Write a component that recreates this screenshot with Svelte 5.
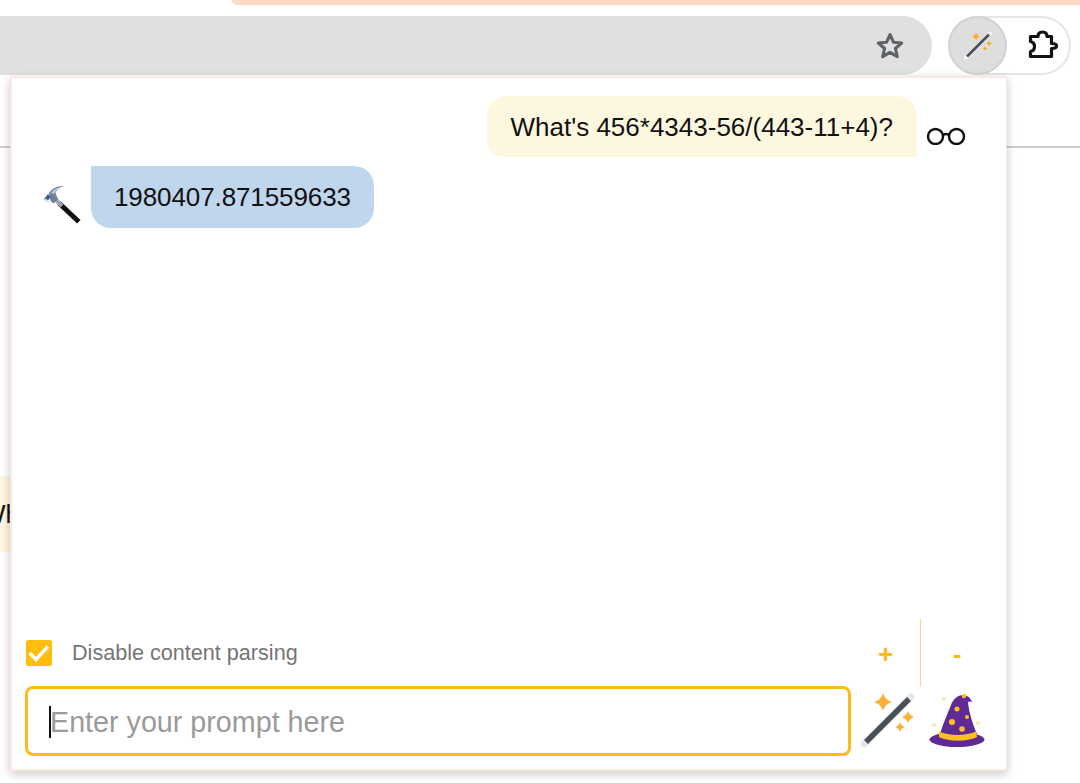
<script>
	const messages = [
		{ id: 1, from: 'user', text: "What's 456*4343-56/(443-11+4)?" },
		{ id: 2, from: 'tool', text: '1980407.871559633' }
	];

	let disableParsing = $state(true);
	let prompt = $state('');
</script>

<div class="window">
	<div class="tabstrip"><div class="active-tab"></div></div>

	<div class="toolbar">
		<div class="omnibox">
			<svg class="star" viewBox="0 0 30 30" width="30" height="30" aria-hidden="true">
				<path
					d="M15 3.600l3.400 7.600 8.300.8-6.300 5.500 1.900 8.100-7.300-4.300-7.300 4.300 1.900-8.100L3.300 12l8.300-.8z"
					fill="none"
					stroke="#5f6368"
					stroke-width="3.100"
					stroke-linejoin="round"
				/>
			</svg>
		</div>
		<div class="extensions">
			<button class="ext-active" aria-label="Open wand">
				<svg viewBox="0 0 30 30" width="30" height="30" aria-hidden="true">
					<path d="M3 26.500L27 2.500" stroke="#fff" stroke-width="3.800" stroke-linecap="round" />
					<path d="M4 25.500L26 3.500" stroke="#4a5258" stroke-width="2.800" />
					<path d="M13 1.500q.8 3.200 4 4-3.200.8-4 4-.8-3.200-4-4 3.200-.8 4-4z" fill="#fbb024" />
					<path d="M26 9.500q.6 2.400 3 3-2.400.6-3 3-.6-2.400-3-3 2.400-.6 3-3z" fill="#fbb024" />
					<path d="M22 15q.5 2 2.500 2.500-2 .5-2.500 2.500-.5-2-2.500-2.500 2-.5 2.500-2.500z" fill="#fbb024" />
				</svg>
			</button>
			<button class="ext-puzzle" aria-label="Extensions">
				<svg viewBox="0 0 32 32" width="32" height="32" aria-hidden="true">
					<path
						d="M2.500 6.500H10c0-3 1.500-4.500 4.500-4.500s4.500 1.500 4.500 4.500h4.500v7c3 0 5 1 5 2.500s-2 2.500-5 2.500v8h-21v-5c2.500-.5 4-2.500 4-5s-1.500-4.500-4-5z"
						fill="none"
						stroke="#111"
						stroke-width="3.200"
						stroke-linejoin="round"
					/>
				</svg>
			</button>
		</div>
	</div>

	<div class="page">
		<div class="page-bar"></div>
		<div class="page-bubble"><span>What</span></div>
	</div>

	<section class="popup">
		<div class="messages">
			{#each messages as msg (msg.id)}
				<div class="row {msg.from}">
					{#if msg.from === 'tool'}
						<svg class="avatar hammer" viewBox="0 0 40 40" width="40" height="40" aria-hidden="true">
							<path d="M20 21L36 36" stroke="#111" stroke-width="5" stroke-linecap="square" />
							<path d="M14 15l7 7" stroke="#98a2ad" stroke-width="4" />
							<path d="M8 9C11 4.500 16 1.500 23 2c-4 1-7.500 3.500-8.500 7.500L17 15l-4.500 4.500-3-2.500z" fill="#71819a" />
							<path d="M10 8.500C13 5 17 3 21 2.500c-3 1.500-6 3.500-7 6.500l-2 1z" fill="#bcc9d8" />
							<path d="M3 15l4-5 3 3-4.500 5z" fill="#3f5f92" />
							<path d="M3 16.500l4 2.500 1.500-1.500-4-3z" fill="#dfe6ee" />
						</svg>
					{/if}
					<div class="bubble">{msg.text}</div>
					{#if msg.from === 'user'}
						<svg class="avatar glasses" viewBox="0 0 40 18" width="40" height="18" aria-hidden="true">
							<g fill="none" stroke="#111" stroke-width="2.400">
								<circle cx="9.500" cy="9.500" r="7.500" />
								<circle cx="30.500" cy="9.500" r="7.500" />
								<path d="M17 8c2-1.400 4-1.400 6 0" />
							</g>
						</svg>
					{/if}
				</div>
			{/each}
		</div>

		<div class="controls">
			<label class="parse-toggle">
				<input type="checkbox" bind:checked={disableParsing} />
				<span class="box">
					{#if disableParsing}
						<svg viewBox="0 0 26 26" width="26" height="26" aria-hidden="true">
							<path d="M3.500 13l6.500 6.500L22 6.500" fill="none" stroke="#fff" stroke-width="3.400" />
						</svg>
					{/if}
				</span>
				Disable content parsing
			</label>
			<div class="zoom-buttons">
				<button>+</button>
				<button>-</button>
			</div>
		</div>

		<div class="composer">
			<div class="prompt-box">
				<span class="caret"></span>
				<input type="text" placeholder="Enter your prompt here" bind:value={prompt} />
			</div>
			<button class="icon-btn" aria-label="Send prompt">
				<svg viewBox="0 0 56 56" width="56" height="56" aria-hidden="true">
					<path d="M3 51L50 4" stroke="#e4e6ea" stroke-width="7" stroke-linecap="round" />
					<path d="M5 49L48 6" stroke="#4a5157" stroke-width="5.500" />
					<path d="M22 0q2 7 9 9-7 2-9 9-2-7-9-9 7-2 9-9z" fill="#fcb034" />
					<path d="M47 18q1.500 4.500 6 6-4.500 1.500-6 6-1.500-4.500-6-6 4.500-1.500 6-6z" fill="#fcb034" />
					<path d="M39 29q1.200 3.800 5 5-3.800 1.200-5 5-1.200-3.800-5-5 3.800-1.200 5-5z" fill="#fcb034" />
				</svg>
			</button>
			<button class="icon-btn" aria-label="Options">
				<svg viewBox="-1 0 58 56" width="58" height="56" aria-hidden="true">
					<path d="M11 41C14 30 19 20 22 12 24 6 29 2 34 2c4 0 8 3 9 7-2-1-3-.5-4 0 1 11 5 23 9 32z" fill="#5f2a94" />
					<ellipse cx="28" cy="46.500" rx="27.500" ry="7.500" fill="#5f2a94" />
					<path d="M10 38.500c10 4.500 27 4.500 37 0l1 5.500c-10 5-28 5-38 0z" fill="#fdc11f" />
					<g fill="#fdc11f">
						<circle cx="35" cy="3" r="2.200" />
						<circle cx="28" cy="16" r="2.500" />
						<circle cx="23" cy="29" r="3" />
						<circle cx="33" cy="36" r="2.800" />
						<circle cx="38" cy="24" r="2" />
						<circle cx="15" cy="6" r="1.800" opacity=".45" />
						<circle cx="5" cy="32" r="1.800" opacity=".45" />
						<circle cx="49" cy="30" r="1.800" opacity=".45" />
					</g>
				</svg>
			</button>
		</div>
	</section>
</div>

<style>
	:global(body) {
		margin: 0;
		background: #fff;
	}

	.window {
		position: relative;
		height: 783px;
		overflow: hidden;
		font-family: 'Liberation Sans', Arial, sans-serif;
	}

	.tabstrip {
		height: 16px;
		padding-left: 232px;
	}

	.active-tab {
		height: 5px;
		background: #fdd9c6;
		border-bottom-left-radius: 14px;
	}

	.toolbar {
		display: flex;
		height: 59px;
		gap: 16px;
		padding-right: 9px;
	}

	.omnibox {
		flex: 1;
		display: flex;
		align-items: center;
		justify-content: flex-end;
		padding-right: 27px;
		background: #e0e0e0;
		border-radius: 0 30px 30px 0;
	}

	.extensions {
		display: flex;
		width: 123px;
		box-sizing: border-box;
		border: 2px solid #e6e6e6;
		border-left: 0;
		border-radius: 30px;
	}

	button {
		padding: 0;
		border: 0;
		background: none;
		cursor: pointer;
		font-family: inherit;
	}

	.ext-active {
		flex: none;
		display: flex;
		align-items: center;
		justify-content: center;
		width: 59px;
		height: 59px;
		margin: -2px 0;
		box-sizing: border-box;
		background: #dedede;
		border: 2px solid #d2d2d2;
		border-radius: 50%;
	}

	.ext-puzzle {
		flex: 1;
		display: flex;
		align-items: center;
		justify-content: center;
		padding-left: 11px;
	}

	.page-bar {
		height: 71px;
		border-bottom: 2px solid #cdcdcd;
	}

	.page-bubble {
		display: flex;
		align-items: center;
		width: 10px;
		height: 76px;
		margin-top: 328px;
		overflow: hidden;
		background: #fdf6e0;
		font-size: 26px;
		color: #111;
	}

	.page-bubble span {
		margin-left: -19px;
		white-space: nowrap;
	}

	/* sits over the page like any extension popup */
	.popup {
		position: absolute;
		top: 76px;
		left: 10px;
		display: flex;
		flex-direction: column;
		width: 997px;
		height: 695px;
		box-sizing: border-box;
		background: #fff;
		border: 2px solid #fbe9e1;
		border-width: 2px 1px 2px 2px;
		box-shadow: 0 3px 9px rgba(0, 0, 0, 0.22);
	}

	.messages {
		flex: 1;
		display: flex;
		flex-direction: column;
		gap: 9px;
		padding-top: 18px;
	}

	.row {
		display: flex;
	}

	.row.user {
		justify-content: flex-end;
		padding-right: 40px;
	}

	.row.tool {
		padding-left: 29px;
	}

	.bubble {
		padding: 16px 24px 14px;
		font-size: 26px;
		line-height: 31px;
		color: #111;
	}

	.user .bubble {
		background: #fef7e0;
		border-radius: 20px 20px 0 16px;
	}

	.tool .bubble {
		padding: 16px 23px 15px;
		letter-spacing: -0.1px;
		background: #bfd6ec;
		border-radius: 0 20px 20px 20px;
	}

	.avatar {
		flex: none;
	}

	.glasses {
		align-self: flex-end;
		margin: 0 0 12px 9px;
	}

	.hammer {
		align-self: flex-end;
		margin: 0 10px 4px 0;
	}

	.controls {
		display: flex;
		align-items: center;
		justify-content: space-between;
		height: 67px;
		padding-left: 14px;
	}

	.parse-toggle {
		display: flex;
		align-items: center;
		gap: 20px;
		font-size: 21.6px;
		color: #757575;
		padding-top: 1px;
	}

	.parse-toggle input {
		display: none;
	}

	.box {
		display: block;
		width: 26px;
		height: 26px;
		background: #ffbd0d;
		border-radius: 2px;
	}

	.zoom-buttons {
		display: flex;
		align-self: stretch;
		padding-right: 15px;
	}

	.zoom-buttons button {
		width: 71px;
		padding: 3px 0 0 2px;
		font-size: 26px;
		font-weight: 700;
		color: #fdb813;
	}

	.zoom-buttons button + button {
		border-left: 1.5px solid #fdd77f;
	}

	.composer {
		display: flex;
		align-items: center;
		height: 70px;
		padding: 0 20px 13px 13px;
	}

	.prompt-box {
		position: relative;
		flex: 1;
		height: 70px;
		box-sizing: border-box;
		border: 3px solid #fdbb1f;
		border-radius: 8px;
	}

	.prompt-box input {
		width: 100%;
		height: 100%;
		box-sizing: border-box;
		padding: 2px 22px 0;
		border: 0;
		outline: 0;
		background: none;
		font-family: inherit;
		font-size: 28.7px;
		color: #111;
	}

	.prompt-box input::placeholder {
		color: #9a9a9a;
		opacity: 1;
	}

	.caret {
		position: absolute;
		top: 17px;
		left: 21px;
		width: 2px;
		height: 32px;
		background: #111;
	}

	.icon-btn {
		display: flex;
		margin-left: 10px;
	}

	.icon-btn + .icon-btn {
		margin-left: 11px;
	}
</style>
